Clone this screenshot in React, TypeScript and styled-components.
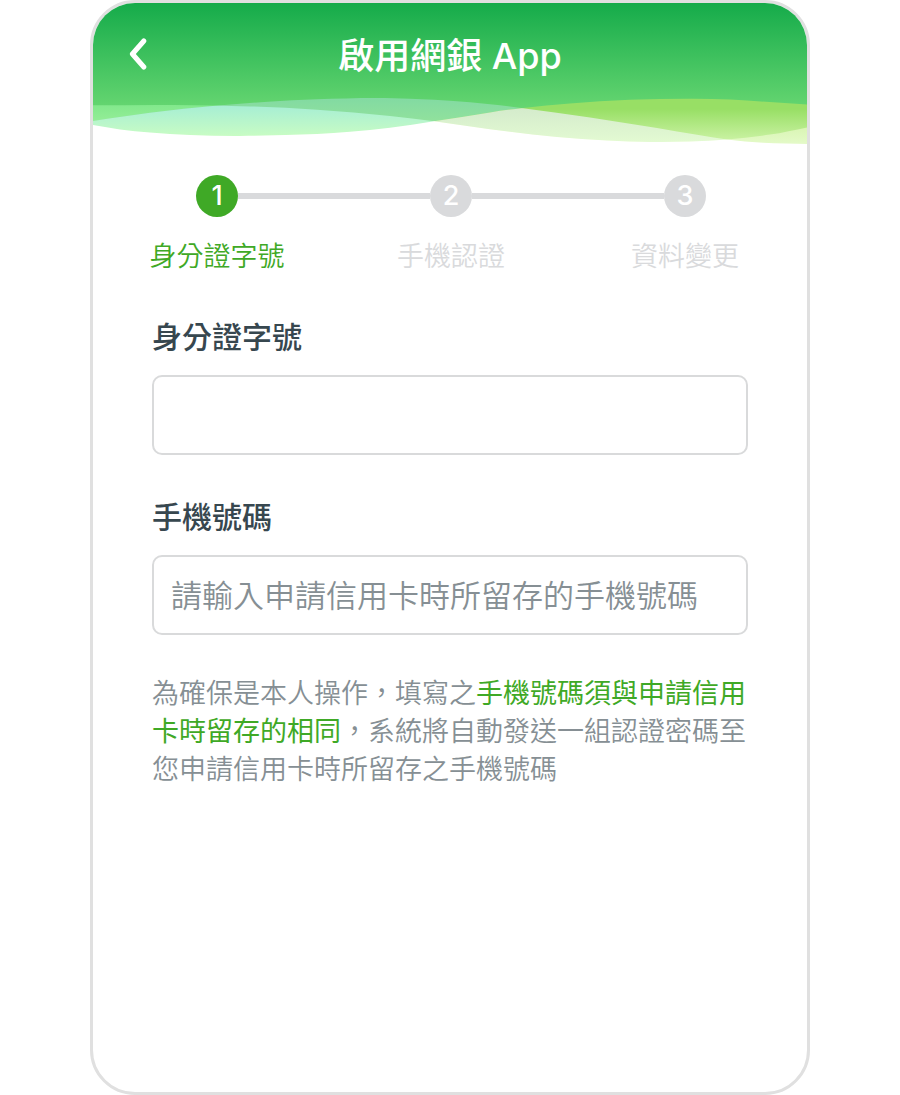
import React from 'react';
import styled, { createGlobalStyle } from 'styled-components';

const GlobalStyle = createGlobalStyle`
  *, *::before, *::after { box-sizing: border-box; }
  body {
    margin: 0;
    background: #ffffff;
    font-family: Inter, 'Noto Sans CJK TC', sans-serif;
  }
`;

const Screen = styled.main`
  width: 80%;
  min-height: 100vh;
  margin: 0 auto;
  border: 3px solid #e0e0e0;
  border-radius: 45px;
  overflow: hidden;
  background: #ffffff;
`;

const Header = styled.header`
  display: grid;
  grid-template-columns: 92px 1fr 92px;
  grid-template-rows: 106px 39px;
`;

const WaveArt = styled.svg`
  grid-column: 1 / -1;
  grid-row: 1 / -1;
  display: block;
  width: 100%;
  height: 145px;
`;

const BackButton = styled.button`
  grid-column: 1;
  grid-row: 1;
  align-self: center;
  justify-self: center;
  display: flex;
  align-items: center;
  justify-content: center;
  width: 48px;
  height: 48px;
  padding: 0;
  border: 0;
  background: transparent;
  cursor: pointer;
`;

const Title = styled.h1`
  grid-column: 2;
  grid-row: 1;
  align-self: center;
  margin: 0;
  color: #ffffff;
  font-size: 36px;
  font-weight: 500;
  line-height: 48px;
  text-align: center;
`;

const Steps = styled.ol`
  display: grid;
  grid-template-columns: repeat(3, 1fr);
  margin: 27px 0 0;
  padding: 0 5px 0 7px;
  list-style: none;
`;

const Step = styled.li<{ $active: boolean }>`
  display: grid;
  grid-template-columns: 1fr 42px 1fr;
  align-items: center;
  row-gap: 21px;
  color: ${(p) => (p.$active ? '#3fa926' : '#d9dadc')};
`;

const Connector = styled.span<{ $shown: boolean }>`
  height: 6px;
  background: ${(p) => (p.$shown ? '#d9dadc' : 'transparent')};
`;

const StepNumber = styled.span<{ $active: boolean }>`
  height: 42px;
  border-radius: 50%;
  background: ${(p) => (p.$active ? '#3fa926' : '#d9dadc')};
  color: #ffffff;
  font-size: 27px;
  font-weight: 500;
  line-height: 42px;
  text-align: center;
`;

const StepLabel = styled.span`
  grid-column: 1 / -1;
  font-size: 27px;
  font-weight: 350;
  line-height: 38px;
  text-align: center;
`;

const Form = styled.form`
  display: flex;
  flex-direction: column;
  gap: 40px;
  padding: 39px 59px;
`;

const Field = styled.div`
  display: flex;
  flex-direction: column;
  gap: 16px;
`;

const FieldLabel = styled.label`
  color: #37474f;
  font-size: 30px;
  font-weight: 500;
  line-height: 44px;
`;

const TextInput = styled.input`
  width: 100%;
  height: 80px;
  padding: 0 17px;
  border: 2px solid #d9dadb;
  border-radius: 10px;
  background: #ffffff;
  color: #37474f;
  font-family: inherit;
  font-size: 31px;
  font-weight: 350;
  outline: none;

  &::placeholder {
    color: #868f94;
    opacity: 1;
  }
`;

const Hint = styled.p`
  margin: 0;
  color: #868f94;
  font-size: 27px;
  font-weight: 350;
  line-height: 38px;
`;

const Highlight = styled.strong`
  color: #3fa926;
  font-weight: 400;
`;

type Point = [number, number];

// Smooth curve through the points, closed along the bottom of the header.
function areaBelow(points: Point[]): string {
  let d = `M${points[0][0]} ${points[0][1]}`;
  for (let i = 0; i < points.length - 1; i++) {
    const a = points[Math.max(i - 1, 0)];
    const b = points[i];
    const c = points[i + 1];
    const e = points[Math.min(i + 2, points.length - 1)];
    const t = (c[0] - b[0]) / 3;
    const sb = (c[1] - a[1]) / (c[0] - a[0]);
    const sc = (e[1] - b[1]) / (e[0] - b[0]);
    d += `C${b[0] + t} ${b[1] + sb * t} ${c[0] - t} ${c[1] - sc * t} ${c[0]} ${c[1]}`;
  }
  return `${d}V145H0Z`;
}

const mist = areaBelow([
  [0, 102.3], [80, 102], [157, 103.4], [224, 106.8], [297, 113], [341, 118.3],
  [397, 126.2], [464, 134], [514, 137.6], [557, 139], [597, 138.6],
  [634, 136.4], [677, 131.6], [714, 124.4],
]);
const teal = areaBelow([
  [0, 118], [57, 109.8], [125, 102.6], [175, 98.8], [224, 96.3], [292, 95],
  [357, 97.8], [397, 101.2], [430, 105.2], [497, 114.5], [564, 125],
  [604, 131.8], [634, 136.4], [670, 139.8], [714, 141],
]);
const lime = areaBelow([
  [0, 122], [27, 126.4], [57, 129.6], [97, 132], [147, 133], [224, 131],
  [257, 128.8], [297, 124.8], [341, 118.3], [397, 109.4], [430, 105],
  [477, 100.4], [537, 96.8], [597, 95.8], [637, 96.6], [714, 101.6],
]);

interface FadeProps {
  id: string;
  y1: number;
  y2: number;
  from: string;
  to: string;
}

const Fade = ({ id, y1, y2, from, to }: FadeProps) => (
  <linearGradient id={id} gradientUnits="userSpaceOnUse" x1="0" x2="0" y1={y1} y2={y2}>
    <stop offset="0" stopColor={from} />
    <stop offset="1" stopColor={to} />
  </linearGradient>
);

const Waves = () => (
  <WaveArt viewBox="0 0 714 145" preserveAspectRatio="none" aria-hidden="true">
    <defs>
      <Fade id="sky" y1={0} y2={106} from="#15ab4a" to="#66d671" />
      <Fade id="leafFill" y1={102} y2={120} from="#82e88c" to="#96ee98" />
      <Fade id="tealFill" y1={95} y2={120} from="#82daa2" to="#92e29c" />
      <Fade id="aquaFill" y1={102} y2={133} from="#a6eed4" to="#c8fcc4" />
      <Fade id="limeFill" y1={106} y2={138} from="#98df65" to="#cbf2a4" />
      <Fade id="paleFill" y1={105} y2={139} from="#d4ebcc" to="#e3fad2" />
      <Fade id="dewFill" y1={124} y2={141} from="#d9f5b4" to="#e4fac8" />
      <clipPath id="leftPart"><rect width="341" height="145" /></clipPath>
      <clipPath id="rightPart"><rect x="341" width="373" height="145" /></clipPath>
      <clipPath id="belowTeal"><path d={teal} /></clipPath>
    </defs>
    <rect width="714" height="125" fill="url(#sky)" />
    <g clipPath="url(#leftPart)">
      <path d={mist} fill="url(#leafFill)" />
      <path d={teal} fill="url(#tealFill)" />
      <path d={mist} fill="url(#aquaFill)" clipPath="url(#belowTeal)" />
      <path d={lime} fill="#ffffff" />
    </g>
    <g clipPath="url(#rightPart)">
      <path d={teal} fill="url(#tealFill)" />
      <path d={lime} fill="url(#limeFill)" />
      <path d={lime} fill="url(#paleFill)" clipPath="url(#belowTeal)" />
      <path d={mist} fill="url(#dewFill)" />
      <path d={mist} fill="#ffffff" clipPath="url(#belowTeal)" />
    </g>
  </WaveArt>
);

const steps = ['身分證字號', '手機認證', '資料變更'];

export default function App() {
  return (
    <>
      <GlobalStyle />
      <Screen lang="zh-Hant-TW">
        <Header>
          <Waves />
          <BackButton type="button" aria-label="返回">
            <svg width="24" height="36" viewBox="0 0 24 36" fill="none" aria-hidden="true">
              <path
                d="M16.8 3L5.4 16L16.8 29"
                stroke="#ffffff"
                strokeWidth="5"
                strokeLinecap="round"
                strokeLinejoin="round"
              />
            </svg>
          </BackButton>
          <Title>啟用網銀 App</Title>
        </Header>

        <Steps>
          {steps.map((label, i) => (
            <Step key={label} $active={i === 0} aria-current={i === 0 ? 'step' : undefined}>
              <Connector $shown={i > 0} />
              <StepNumber $active={i === 0}>{i + 1}</StepNumber>
              <Connector $shown={i < steps.length - 1} />
              <StepLabel>{label}</StepLabel>
            </Step>
          ))}
        </Steps>

        <Form onSubmit={(e) => e.preventDefault()}>
          <Field>
            <FieldLabel htmlFor="id-number">身分證字號</FieldLabel>
            <TextInput id="id-number" type="text" autoComplete="off" />
          </Field>
          <Field>
            <FieldLabel htmlFor="phone">手機號碼</FieldLabel>
            <TextInput id="phone" type="tel" placeholder="請輸入申請信用卡時所留存的手機號碼" />
          </Field>
          <Hint>
            為確保是本人操作，填寫之<Highlight>手機號碼須與申請信用卡時留存的相同</Highlight>
            ，系統將自動發送一組認證密碼至您申請信用卡時所留存之手機號碼
          </Hint>
        </Form>
      </Screen>
    </>
  );
}
